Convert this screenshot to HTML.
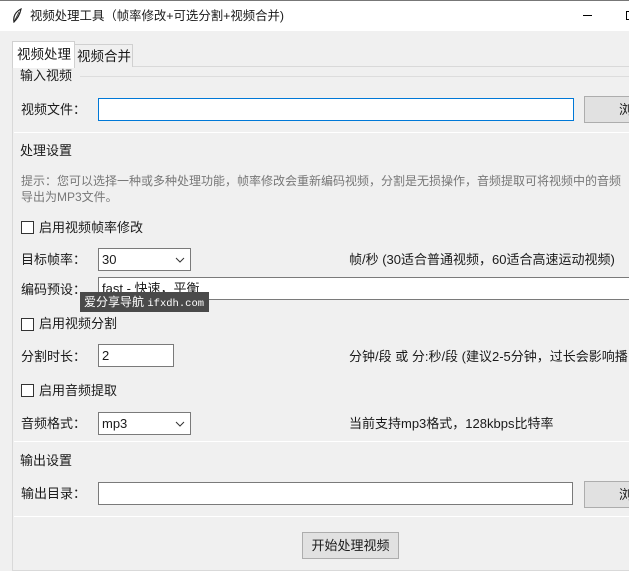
<!DOCTYPE html>
<html><head><meta charset="utf-8"><style>
*{box-sizing:border-box;margin:0;padding:0}
body{width:629px;height:567px;overflow:hidden;background:#f0f0f0;font-family:"Liberation Sans","Noto Sans CJK SC","Microsoft YaHei",sans-serif;font-size:13px;color:#1a1a1a;position:relative}
.a{position:absolute;white-space:nowrap}
.t{line-height:16px}
.entry{position:absolute;background:#fff;border:1px solid #7a7a7a;height:23px}
.btn{position:absolute;background:#e1e1e1;border:1px solid #adadad;text-align:center;line-height:25px}
.sep{position:absolute;left:14px;right:0;height:1px;background:#d8d8d8;border-bottom:1px solid #fff}
.cb{position:absolute;width:13px;height:13px;border:1px solid #333;background:#fff}
.combo{position:absolute;background:#fff;border:1px solid #7a7a7a;height:23px;padding-left:3px;line-height:21px}
.combo svg{position:absolute;right:5px;top:8px}
</style></head><body>
<div class="a" style="left:0;top:0;width:629px;height:31px;background:#fff;border-top:1px solid #777"></div>
<svg class="a" style="left:12px;top:8px" width="10" height="15" viewBox="0 0 10 15"><path d="M2 14 C1 9 3 4 9 1 C8 6 6 10 2 14Z" fill="none" stroke="#222" stroke-width="1.2"/><path d="M2 14 L7 4" stroke="#222" stroke-width="0.8"/></svg>
<div class="a t" style="left:30px;top:8px;font-size:12.4px">视频处理工具（帧率修改+可选分割+视频合并)</div>
<div class="a" style="left:583px;top:15px;width:9px;height:1px;background:#000"></div>
<div class="a" style="left:626px;top:11px;width:4px;height:9px;border:1px solid #000;border-right:none"></div>
<div class="a" style="left:12px;top:66px;width:620px;height:505px;border:1px solid #d9d9d9;background:#f0f0f0"></div>
<div class="a" style="left:74px;top:44px;width:59px;height:23px;border:1px solid #d0d0d0;border-bottom:none;background:#f0f0f0"></div>
<div class="a t" style="left:77px;top:49px;font-size:13.5px">视频合并</div>
<div class="a" style="left:12px;top:41px;width:63px;height:27px;border:1px solid #d0d0d0;border-bottom:none;background:#fff"></div>
<div class="a t" style="left:17px;top:47px;font-size:13.5px">视频处理</div>
<div class="a t" style="left:20px;top:68px">输入视频</div>
<div class="a" style="left:80px;top:76px;right:0;height:1px;background:#ddd"></div>
<div class="a t" style="left:21px;top:102px">视频文件：</div>
<div class="entry" style="left:98px;top:98px;width:476px;border-color:#0078d7"></div>
<div class="btn" style="left:584px;top:96px;width:60px;height:27px;text-align:left;padding-left:34px">浏</div>
<div class="sep" style="top:132px"></div>
<div class="a t" style="left:20px;top:143px">处理设置</div>
<div class="a t" style="left:21px;top:173px;font-size:12px;color:#777">提示：您可以选择一种或多种处理功能，帧率修改会重新编码视频，分割是无损操作，音频提取可将视频中的音频</div>
<div class="a t" style="left:21px;top:189px;font-size:12px;color:#777">导出为MP3文件。</div>
<div class="cb" style="left:21px;top:221px"></div>
<div class="a t" style="left:39px;top:220px">启用视频帧率修改</div>
<div class="a t" style="left:21px;top:252px">目标帧率：</div>
<div class="combo" style="left:98px;top:248px;width:93px">30<svg width="10" height="6"><path d="M1 1 L5 5 L9 1" fill="none" stroke="#333"/></svg></div>
<div class="a t" style="left:349px;top:252px">帧/秒 (30适合普通视频，60适合高速运动视频)</div>
<div class="a t" style="left:21px;top:282px">编码预设：</div>
<div class="entry" style="left:98px;top:277px;width:540px;padding-left:3px;line-height:21px">fast - 快速，平衡</div>
<div class="a" style="left:80px;top:292px;width:129px;height:20px;background:#4a4a4a;color:#fff;font-size:12px;line-height:20px;padding-left:4px;overflow:hidden">爱分享导航 <span style="font-family:'Liberation Mono',monospace;font-size:10.5px">ifxdh.com</span></div>
<div class="cb" style="left:21px;top:318px"></div>
<div class="a t" style="left:39px;top:316px">启用视频分割</div>
<div class="a t" style="left:21px;top:349px">分割时长：</div>
<div class="entry" style="left:98px;top:344px;width:76px;padding-left:3px;line-height:21px">2</div>
<div class="a t" style="left:349px;top:349px">分钟/段 或 分:秒/段 (建议2-5分钟，过长会影响播</div>
<div class="cb" style="left:21px;top:384px"></div>
<div class="a t" style="left:39px;top:383px">启用音频提取</div>
<div class="a t" style="left:21px;top:416px">音频格式：</div>
<div class="combo" style="left:98px;top:412px;width:93px">mp3<svg width="10" height="6"><path d="M1 1 L5 5 L9 1" fill="none" stroke="#333"/></svg></div>
<div class="a t" style="left:349px;top:416px">当前支持mp3格式，128kbps比特率</div>
<div class="sep" style="top:441px"></div>
<div class="a t" style="left:20px;top:453px">输出设置</div>
<div class="a t" style="left:21px;top:486px">输出目录：</div>
<div class="entry" style="left:98px;top:482px;width:475px"></div>
<div class="btn" style="left:584px;top:481px;width:60px;height:27px;text-align:left;padding-left:34px">浏</div>
<div class="sep" style="top:516px"></div>
<div class="btn" style="left:302px;top:532px;width:97px;height:27px">开始处理视频</div>
</body></html>
